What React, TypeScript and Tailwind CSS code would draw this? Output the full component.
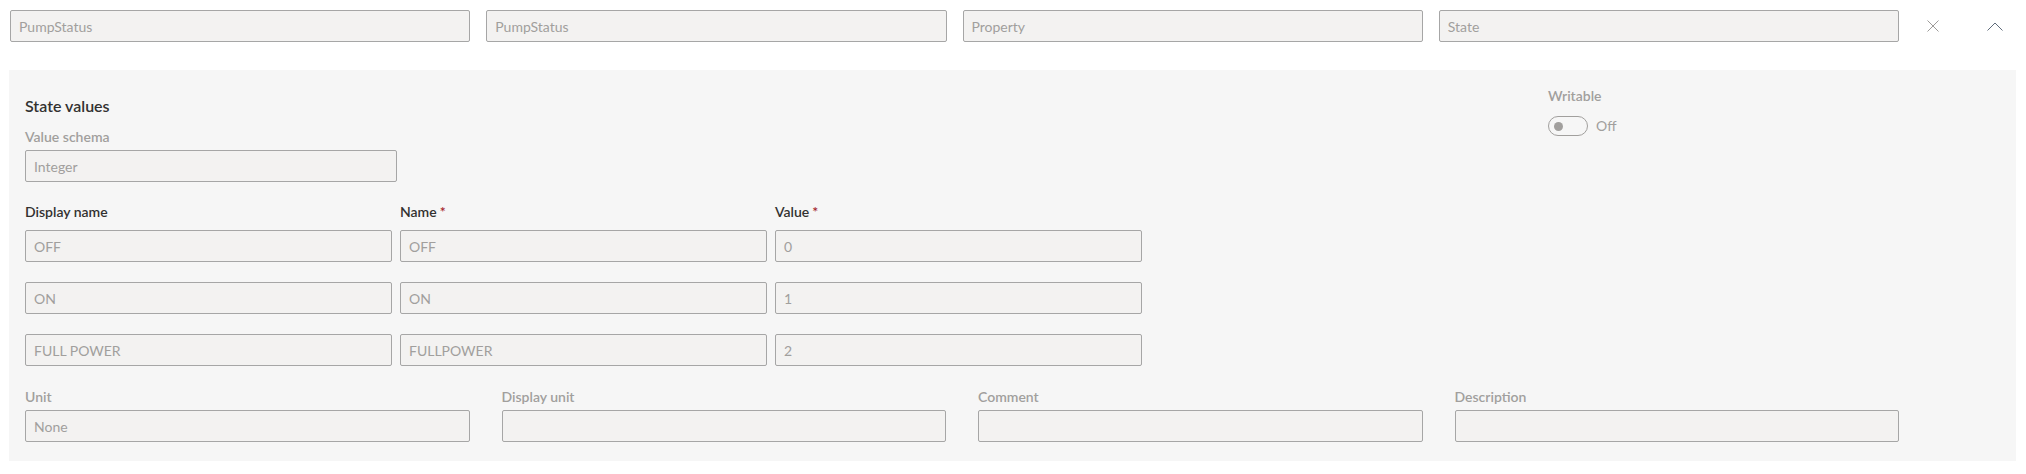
import React from "react";

const font = { fontFamily: '"Segoe UI", Lato, "Open Sans", sans-serif' };

function Field({ value, className = "" }: { value?: string; className?: string }) {
  return (
    <div
      className={
        "h-8 rounded-[2px] border border-[#a6a6a6] bg-[#f3f2f1] px-2 flex items-center text-[14px] text-[#a19f9d] " +
        className
      }
    >
      {value}
    </div>
  );
}

function Label({ text, dark, required }: { text: string; dark?: boolean; required?: boolean }) {
  return (
    <div
      className={
        "h-5 leading-[20px] text-[14px] font-semibold " + (dark ? "text-[#323130]" : "text-[#a19f9d]")
      }
    >
      {text}
      {required && <span className="ml-[3px] text-[#a4262c]">*</span>}
    </div>
  );
}

export default function App() {
  const rows = [
    ["OFF", "OFF", "0"],
    ["ON", "ON", "1"],
    ["FULL POWER", "FULLPOWER", "2"],
  ];
  return (
    <div className="w-[2026px] h-[474px] bg-white" style={font}>
      <div className="flex items-center pt-[10px] pl-[10px]">
        <div className="grid w-[1889px] grid-cols-4 gap-4">
          <Field value="PumpStatus" />
          <Field value="PumpStatus" />
          <Field value="Property" />
          <Field value="State" />
        </div>
        <button className="ml-[18px] flex h-8 w-8 items-center justify-center">
          <svg width="12" height="12" viewBox="0 0 12 12" fill="none" stroke="#9d9b99" strokeWidth="1">
            <line x1="0.5" y1="0.5" x2="11.5" y2="11.5" />
            <line x1="11.5" y1="0.5" x2="0.5" y2="11.5" />
          </svg>
        </button>
        <button className="ml-[30px] flex h-8 w-8 items-center justify-center">
          <svg width="16" height="9" viewBox="0 0 16 9" fill="none" stroke="#5f6b7a" strokeWidth="1">
            <polyline points="0.5,8.5 8,1 15.5,8.5" />
          </svg>
        </button>
      </div>

      <div className="ml-[9px] mr-[10px] mt-[28px] bg-[#f6f6f6] pl-4 pt-[16px] pb-[19px]">
        <div className="flex">
          <div className="w-[1523px]">
            <div className="mt-[9px] leading-[22px] text-[16px] font-semibold text-[#323130]">State values</div>
            <div className="mt-[10px]">
              <Label text="Value schema" />
            </div>
            <Field value="Integer" className="mt-[3px] w-[372px]" />
          </div>
          <div>
            <Label text="Writable" />
            <div className="mt-[10px] flex items-center">
              <div className="flex h-5 w-10 items-center rounded-full border border-[#a19f9d] px-[5px]">
                <div className="h-[9px] w-[9px] rounded-full bg-[#a19f9d]" />
              </div>
              <span className="ml-2 text-[14px] leading-5 text-[#a19f9d]">Off</span>
            </div>
          </div>
        </div>

        <div className="mt-[20px] grid w-[1117px] grid-cols-3 gap-x-2">
          <Label text="Display name" dark />
          <Label text="Name" dark required />
          <Label text="Value" dark required />
        </div>
        <div className="mt-[8px] flex flex-col gap-5">
          {rows.map((r, i) => (
            <div key={i} className="grid w-[1117px] grid-cols-3 gap-x-2">
              <Field value={r[0]} />
              <Field value={r[1]} />
              <Field value={r[2]} />
            </div>
          ))}
        </div>

        <div className="mt-[21px] grid w-[1874px] grid-cols-4 gap-x-8">
          {[
            ["Unit", "None"],
            ["Display unit", ""],
            ["Comment", ""],
            ["Description", ""],
          ].map(([l, v]) => (
            <div key={l}>
              <Label text={l} />
              <Field value={v} className="mt-[3px]" />
            </div>
          ))}
        </div>
      </div>
    </div>
  );
}
